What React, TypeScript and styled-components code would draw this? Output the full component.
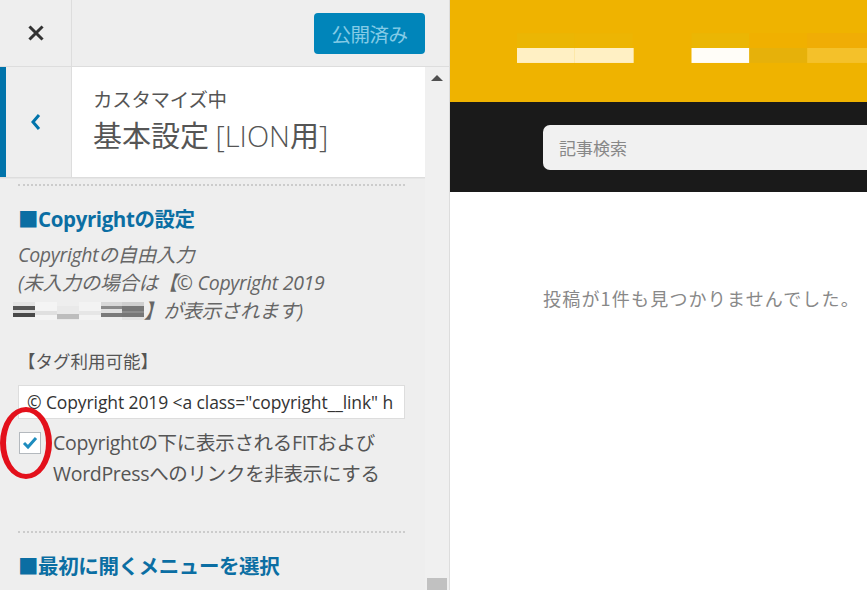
import React from 'react';
import styled, { createGlobalStyle } from 'styled-components';

const GlobalStyle = createGlobalStyle`
  html, body {
    margin: 0;
    padding: 0;
    background: #fff;
  }
  body {
    font-family: 'Open Sans', 'Noto Sans CJK JP', sans-serif;
  }
  * { box-sizing: border-box; }
`;

const Page = styled.div`
  display: flex;
  width: 867px;
  height: 590px;
  overflow: hidden;
`;

// Customizer sidebar
const Sidebar = styled.aside`
  width: 450px;
  flex: 0 0 450px;
  display: flex;
  flex-direction: column;
  background: #eee;
  border-right: 1px solid #ddd;
`;

const Header = styled.div`
  height: 67px;
  flex: 0 0 67px;
  display: flex;
  align-items: center;
  border-bottom: 1px solid #ddd;
  padding-right: 24px;
`;

const CloseButton = styled.div`
  width: 72px;
  height: 100%;
  display: flex;
  align-items: center;
  justify-content: center;
  border-right: 1px solid #ddd;
  color: #333;
`;

const PublishButton = styled.div`
  margin-left: auto;
  width: 111px;
  height: 41px;
  border-radius: 4px;
  background: #0085ba;
  color: #84cbe6;
  font-family: 'Noto Sans CJK JP', sans-serif;
  font-size: 19.5px;
  display: flex;
  align-items: center;
  justify-content: center;
  letter-spacing: -0.5px;
`;

const Body = styled.div`
  flex: 1;
  display: flex;
  min-height: 0;
`;

const Content = styled.div`
  flex: 1;
  display: flex;
  flex-direction: column;
`;

const SectionHead = styled.div`
  height: 110px;
  display: flex;
  border-left: 6px solid #0073aa;
  box-shadow: 0 1px 0 #ddd, 0 2px 0 #e6e6e6;
`;

const BackButton = styled.div`
  width: 66px;
  display: flex;
  align-items: center;
  justify-content: center;
  padding-right: 6px;
  color: #0073aa;
  border-right: 1px solid #ddd;
`;

const TitleBox = styled.div`
  flex: 1;
  background: #fff;
  padding: 18px 0 0 21px;
  color: #555;
  font-family: 'Noto Sans CJK JP', sans-serif;
`;

const SubTitle = styled.div`
  font-size: 19.5px;
  line-height: 28px;
  letter-spacing: -0.3px;
`;

const MainTitle = styled.div`
  font-size: 29px;
  line-height: 40px;
  margin-top: 1px;

  span {
    font-family: 'Open Sans', 'Noto Sans CJK JP', sans-serif;
    font-weight: 300;
  }
`;

const Controls = styled.div`
  padding: 7px 20px 0 18px;
  color: #555;
`;

const Divider = styled.div`
  border-top: 2px dotted #ccc;
  height: 0;
`;

const ControlTitle = styled.div<{ $top: number }>`
  margin-top: ${p => p.$top}px;
  font-size: 20.5px;
  line-height: 26px;
  font-weight: 700;
  color: #0b6ea3;
  letter-spacing: -0.4px;
`;

const Description = styled.div`
  margin-top: 9px;
  font-size: 19.5px;
  line-height: 28px;
  font-style: italic;
  color: #666;
  font-family: 'Open Sans', 'Noto Sans CJK JP', sans-serif;
  letter-spacing: -0.3px;
`;

const MosaicLine = styled.div`
  display: flex;
  align-items: center;
  margin-left: -5px;
`;

const TagNote = styled.div`
  margin-top: 22px;
  font-size: 17.5px;
  line-height: 28px;
  color: #555;
  font-family: 'Noto Sans CJK JP', sans-serif;
`;

const TextInput = styled.div`
  margin-top: 10px;
  height: 34px;
  background: #fff;
  border: 1px solid #ddd;
  padding: 0 8px;
  display: flex;
  align-items: center;
  font-size: 17.5px;
  color: #333;
  white-space: nowrap;
  overflow: hidden;
  font-family: 'Open Sans', 'Noto Sans CJK JP', sans-serif;
  letter-spacing: -0.1px;
`;

const Spacer = styled.div<{ $h: number }>`
  height: ${p => p.$h}px;
`;

const CheckRow = styled.div`
  position: relative;
  display: flex;
  margin-top: 12px;
  gap: 12px;
`;

const CheckBox = styled.div`
  margin: 1px 0 0 1px;
  width: 22px;
  height: 22px;
  flex: 0 0 22px;
  border: 1px solid #b4b9be;
  background: #fff;
  display: flex;
  align-items: center;
  justify-content: center;
  color: #1e8cbe;
`;

const CheckLabel = styled.div`
  font-size: 19.5px;
  line-height: 31px;
  margin-top: -4px;
  color: #555;
  font-family: 'Open Sans', 'Noto Sans CJK JP', sans-serif;
  letter-spacing: -0.3px;
  white-space: nowrap;
`;

// red annotation ring over the checkbox
const Annotation = styled.div`
  position: absolute;
  left: -18px;
  top: -24px;
  width: 52px;
  height: 72px;
  border: 5px solid #e3101b;
  border-left-width: 6px;
  border-right-width: 6px;
  border-radius: 50%;
  pointer-events: none;
`;

const Scrollbar = styled.div`
  width: 24px;
  flex: 0 0 24px;
  background: #f0f0f0;
  display: flex;
  flex-direction: column;
  align-items: center;
  padding-top: 8px;
`;

const ScrollUp = styled.div`
  width: 0;
  height: 0;
  border-left: 6px solid transparent;
  border-right: 6px solid transparent;
  border-bottom: 6px solid #505050;
`;

const ScrollThumb = styled.div`
  margin-top: auto;
  width: 20px;
  height: 12px;
  background: #c1c1c1;
`;

// Site preview
const Preview = styled.main`
  flex: 1;
  display: flex;
  flex-direction: column;
  background: #fff;
  min-width: 0;
`;

const SiteHeader = styled.div`
  height: 102px;
  background: #efb300;
  display: flex;
  align-items: center;
  padding: 0 0 6px 67px;
`;

const SearchBand = styled.div`
  height: 90px;
  background: #1a1a1a;
  display: flex;
  align-items: center;
  padding-left: 93px;
`;

const SearchBox = styled.div`
  flex: 1;
  height: 45px;
  border-radius: 7px 0 0 7px;
  background: #f1f1f1;
  display: flex;
  align-items: center;
  padding-left: 16px;
  font-family: 'Noto Sans CJK JP', sans-serif;
  font-size: 17px;
  color: #888;
`;

const EmptyArea = styled.div`
  padding: 94px 0 0 93px;
  font-family: 'Noto Sans CJK JP', sans-serif;
  font-size: 18px;
  line-height: 24px;
  color: #888;
  letter-spacing: 1.2px;
  white-space: nowrap;
`;

type Block = [number, number, number, number, string];

const Mosaic = ({ blocks, width, height }: { blocks: Block[]; width: number; height: number }) => (
  <svg width={width} height={height} viewBox={`0 0 ${width} ${height}`}>
    {blocks.map(([x, y, w, h, c], i) => (
      <rect key={i} x={x} y={y} width={w} height={h} fill={c} />
    ))}
  </svg>
);

const nameBlocks: Block[] = [
  [0, 0, 22, 4, '#e4e4e4'],
  [0, 4, 22, 4, '#555'],
  [0, 8, 22, 3, '#ddd'],
  [0, 11, 22, 4, '#4a4a4a'],
  [0, 15, 22, 3, '#f2f2f2'],
  [22, 0, 22, 18, '#f4f4f4'],
  [22, 9, 22, 4, '#e0e0e0'],
  [44, 4, 22, 14, '#e9e9e9'],
  [44, 12, 22, 5, '#bdbdbd'],
  [66, 0, 22, 18, '#f3f3f3'],
  [66, 9, 22, 4, '#e6e6e6'],
  [88, 0, 21, 4, '#d8d8d8'],
  [88, 4, 21, 3, '#8a8a8a'],
  [88, 7, 21, 4, '#e0e0e0'],
  [88, 11, 21, 4, '#7a7a7a'],
  [88, 15, 21, 3, '#eee'],
  [109, 0, 22, 4, '#cfcfcf'],
  [109, 4, 22, 11, '#777'],
  [109, 9, 22, 2, '#8c8c8c'],
  [109, 15, 22, 3, '#e4e4e4'],
];

const logoBlocks: Block[] = [
  [0, 0, 58, 15, '#ebb604'],
  [58, 0, 58, 15, '#edb503'],
  [0, 15, 58, 15, '#fff0c4'],
  [58, 15, 59, 15, '#fff0c4'],
  [175, 0, 58, 15, '#ebb604'],
  [233, 0, 58, 15, '#f0b000'],
  [291, 0, 60, 15, '#f0ad05'],
  [175, 15, 58, 15, '#fffdf8'],
  [233, 15, 58, 15, '#e6b10a'],
  [291, 15, 60, 15, '#f4c12a'],
];

export default function App() {
  return (
    <Page>
      <GlobalStyle />
      <Sidebar>
        <Header>
          <CloseButton>
            <svg width="16" height="16" viewBox="0 0 16 16">
              <path d="M2.5 2.5 L13.5 13.5 M13.5 2.5 L2.5 13.5" stroke="currentColor" strokeWidth="3" strokeLinecap="square" />
            </svg>
          </CloseButton>
          <PublishButton>公開済み</PublishButton>
        </Header>
        <Body>
          <Content>
            <SectionHead>
              <BackButton>
                <svg width="14" height="20" viewBox="0 0 14 20">
                  <path d="M10 3 L4 10 L10 17" stroke="currentColor" strokeWidth="3" fill="none" />
                </svg>
              </BackButton>
              <TitleBox>
                <SubTitle>カスタマイズ中</SubTitle>
                <MainTitle>
                  基本設定 <span>[LION</span>用<span>]</span>
                </MainTitle>
              </TitleBox>
            </SectionHead>
            <Controls>
              <Divider />
              <ControlTitle $top={20}>■Copyrightの設定</ControlTitle>
              <Description>
                Copyrightの自由入力
                <br />
                (未入力の場合は【© Copyright 2019
                <MosaicLine>
                  <Mosaic blocks={nameBlocks} width={131} height={18} />
                  】が表示されます)
                </MosaicLine>
              </Description>
              <TagNote>【タグ利用可能】</TagNote>
              <TextInput>© Copyright 2019 &lt;a class="copyright__link" h</TextInput>
              <CheckRow>
                <CheckBox>
                  <svg width="16" height="14" viewBox="0 0 16 14">
                    <path d="M2 7 L6 11 L14 2" stroke="currentColor" strokeWidth="3" fill="none" />
                  </svg>
                </CheckBox>
                <CheckLabel>
                  Copyrightの下に表示されるFITおよび
                  <br />
                  WordPressへのリンクを非表示にする
                </CheckLabel>
                <Annotation />
              </CheckRow>
              <Spacer $h={42} />
              <Divider />
              <ControlTitle $top={20}>■最初に開くメニューを選択</ControlTitle>
            </Controls>
          </Content>
          <Scrollbar>
            <ScrollUp />
            <ScrollThumb />
          </Scrollbar>
        </Body>
      </Sidebar>
      <Preview>
        <SiteHeader>
          <Mosaic blocks={logoBlocks} width={351} height={30} />
        </SiteHeader>
        <SearchBand>
          <SearchBox>記事検索</SearchBox>
        </SearchBand>
        <EmptyArea>投稿が1件も見つかりませんでした。</EmptyArea>
      </Preview>
    </Page>
  );
}
